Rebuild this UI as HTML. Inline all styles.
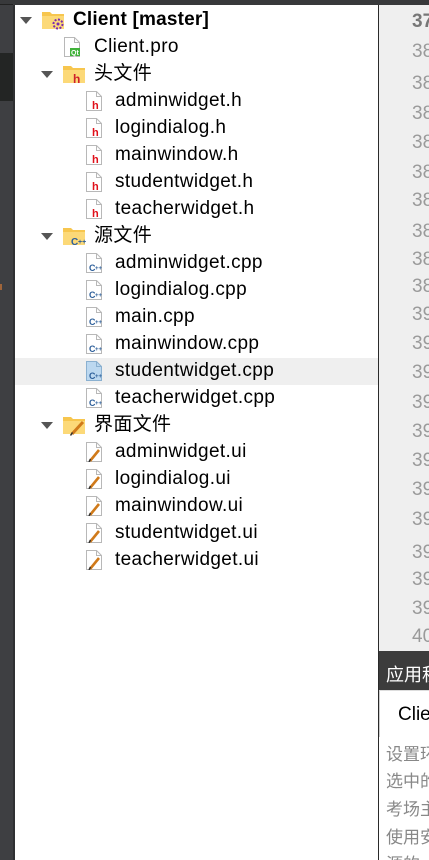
<!DOCTYPE html>
<html style="overflow:hidden;width:429px;height:860px"><head><meta charset="utf-8"><style>
*{margin:0;padding:0;box-sizing:border-box}
body{width:429px;height:860px;overflow:hidden;background:#fff;position:relative;font-family:"Liberation Sans","Noto Sans CJK SC",sans-serif}
.a{position:absolute}
.row{position:absolute;left:15px;width:363px;height:27px}
.t{position:absolute;top:2px;font-size:19px;letter-spacing:0.35px;color:#000;line-height:22px;white-space:nowrap}
.ic{position:absolute;top:3px}
.arr{position:absolute;top:10px;width:0;height:0;border-left:6px solid transparent;border-right:6px solid transparent;border-top:7px solid #555}
.ln{position:absolute;left:412px;font-size:19px;color:#9a9a9a;font-family:"Liberation Sans",sans-serif}
.g{position:absolute;left:386px;font-size:17px;color:#888;white-space:nowrap;font-family:"Liberation Sans","Noto Sans CJK SC",sans-serif}
</style></head><body>
<div class="a" style="left:0;top:0;width:13px;height:860px;background:#3e3f42"></div>
<div class="a" style="left:0;top:53px;width:13px;height:48px;background:#232524"></div>
<div class="a" style="left:0;top:284px;width:2px;height:6px;background:#a0653a"></div>
<div class="a" style="left:13px;top:0;width:2px;height:860px;background:#2f3032"></div>
<div class="a" style="left:0;top:0;width:429px;height:5px;background:#38393b"></div>
<div class="a" style="left:0;top:4px;width:13px;height:1px;background:#222"></div>
<div class="a" style="left:379px;top:5px;width:50px;height:646px;background:#efefef"></div>
<div class="a" style="left:378px;top:5px;width:1px;height:855px;background:#2a2a2a"></div>
<div class="a" style="left:15px;top:358px;width:363px;height:27px;background:#efefef"></div>

<svg width="0" height="0" style="position:absolute"><defs>
<symbol id="file" viewBox="0 0 16 20"><path d="M0.5 0.5H10.5L15.5 5.5V19.5H0.5Z" fill="#fff" stroke="#b8b8b8"/><path d="M10.5 0.5V5.5H15.5" fill="none" stroke="#b8b8b8"/></symbol>
<symbol id="fileb" viewBox="0 0 16 20"><path d="M0.5 0.5H10.5L15.5 5.5V19.5H0.5Z" fill="#bcd8f0" stroke="#8ab0d0"/><path d="M10.5 0.5V5.5H15.5" fill="none" stroke="#8ab0d0"/></symbol>
<symbol id="folder" viewBox="0 0 24 20"><path d="M1 2H9L11 4H23V19H1Z" fill="#f7c64e"/><path d="M1 6H23V19H1Z" fill="#fcd978"/></symbol>
</defs></svg>

<div class="row" style="top:7px"><div class="arr" style="left:5px"></div>
<svg class="ic" style="left:26px;top:2px" width="24" height="22"><use href="#folder"/><circle cx="17" cy="15" r="4.5" fill="none" stroke="#7a2bb0" stroke-width="2" stroke-dasharray="2 1.5"/><circle cx="17" cy="15" r="1.5" fill="#7a2bb0"/></svg>
<div class="t" style="left:58px;font-weight:bold;letter-spacing:0.2px">Client [master]</div></div>

<div class="row" style="top:34px"><svg class="ic" style="left:49px" width="16" height="20"><use href="#file"/><rect x="6" y="11" width="10" height="8" fill="#41b23b"/><text x="7" y="18" font-size="7" fill="#fff" font-family="Liberation Sans" font-weight="bold">Qt</text></svg>
<div class="t" style="left:79px">Client.pro</div></div>

<div class="row" style="top:61px"><div class="arr" style="left:26px"></div>
<svg class="ic" style="left:47px;top:2px" width="24" height="22"><use href="#folder"/><text x="11" y="20" font-size="12" fill="#d0202a" font-family="Liberation Sans" font-weight="bold">h</text></svg>
<div class="t" style="left:79px">头文件</div></div>

<script>
function add(top,name,kind){
  var d=document.createElement('div');d.className='row';d.style.top=top+'px';
  var ic='';
  if(kind=='h') ic='<svg class="ic" style="left:71px" width="16" height="20"><use href="#file"/><text x="6" y="18" font-size="11" fill="#e0101a" font-family="Liberation Sans" font-weight="bold">h</text></svg>';
  if(kind=='c'||kind=='cb') ic='<svg class="ic" style="left:71px" width="16" height="20"><use href="#'+(kind=='cb'?'fileb':'file')+'"/><text x="3" y="18" font-size="9" fill="#2d5f9a" font-family="Liberation Sans" font-weight="bold">C</text><text x="9" y="17" font-size="6" fill="#2d5f9a" font-family="Liberation Sans" font-weight="bold">++</text></svg>';
  if(kind=='u') ic='<svg class="ic" style="left:71px" width="16" height="20"><use href="#file"/><path d="M4 19L13 8" stroke="#d07a1a" stroke-width="2.6"/><path d="M3 20L4.5 17" stroke="#333" stroke-width="1.5"/></svg>';
  d.innerHTML=ic+'<div class="t" style="left:100px">'+name+'</div>';
  document.body.appendChild(d);
}
var r=3;
['adminwidget.h','logindialog.h','mainwindow.h','studentwidget.h','teacherwidget.h'].forEach(function(n){add(7+27*r,n,'h');r++;});
r=9;
['adminwidget.cpp','logindialog.cpp','main.cpp','mainwindow.cpp','studentwidget.cpp','teacherwidget.cpp'].forEach(function(n,i){add(7+27*r,n,i==4?'cb':'c');r++;});
r=16;
['adminwidget.ui','logindialog.ui','mainwindow.ui','studentwidget.ui','teacherwidget.ui'].forEach(function(n){add(7+27*r,n,'u');r++;});
</script>

<div class="row" style="top:223px"><div class="arr" style="left:26px"></div>
<svg class="ic" style="left:47px;top:2px" width="24" height="22"><use href="#folder"/><text x="9" y="20" font-size="10" fill="#2d5f9a" font-family="Liberation Sans" font-weight="bold">C</text><text x="16" y="19" font-size="7" fill="#2d5f9a" font-weight="bold" font-family="Liberation Sans">++</text></svg>
<div class="t" style="left:79px">源文件</div></div>

<div class="row" style="top:412px"><div class="arr" style="left:26px"></div>
<svg class="ic" style="left:47px;top:2px" width="24" height="22"><use href="#folder"/><path d="M10 20L21 8" stroke="#d07a1a" stroke-width="3"/><path d="M8.5 21.5L10.5 18.5" stroke="#333" stroke-width="1.5"/></svg>
<div class="t" style="left:79px">界面文件</div></div>

<div class="ln" style="top:11px;color:#777;font-weight:bold">37</div>
<div class="ln" style="top:41px">38</div>
<div class="ln" style="top:73px">38</div>
<div class="ln" style="top:103px">38</div>
<div class="ln" style="top:132px">38</div>
<div class="ln" style="top:162px">38</div>
<div class="ln" style="top:190px">38</div>
<div class="ln" style="top:221px">38</div>
<div class="ln" style="top:249px">38</div>
<div class="ln" style="top:276px">38</div>
<div class="ln" style="top:304px">39</div>
<div class="ln" style="top:333px">39</div>
<div class="ln" style="top:362px">39</div>
<div class="ln" style="top:392px">39</div>
<div class="ln" style="top:421px">39</div>
<div class="ln" style="top:450px">39</div>
<div class="ln" style="top:479px">39</div>
<div class="ln" style="top:509px">39</div>
<div class="ln" style="top:542px">39</div>
<div class="ln" style="top:569px">39</div>
<div class="ln" style="top:598px">39</div>
<div class="ln" style="top:626px">40</div>

<div class="a" style="left:379px;top:651px;width:50px;height:39px;background:#3c3c3c"></div>
<div class="a" style="left:386px;top:661px;font-size:18px;color:#fff;white-space:nowrap">应用程序</div>
<div class="a" style="left:379px;top:690px;width:50px;height:47px;background:#fff;border-left:1px solid #ccc;border-top:1px solid #ddd"></div>
<div class="a" style="left:398px;top:704px;font-size:19px;color:#000">Client</div>
<div class="a" style="left:379px;top:737px;width:50px;height:123px;background:#fff"></div>
<div class="g" style="top:740px">设置环境</div>
<div class="g" style="top:767px">选中的</div>
<div class="g" style="top:795px">考场主</div>
<div class="g" style="top:823px">使用安</div>
<div class="g" style="top:850px">源的</div>
</body></html>
